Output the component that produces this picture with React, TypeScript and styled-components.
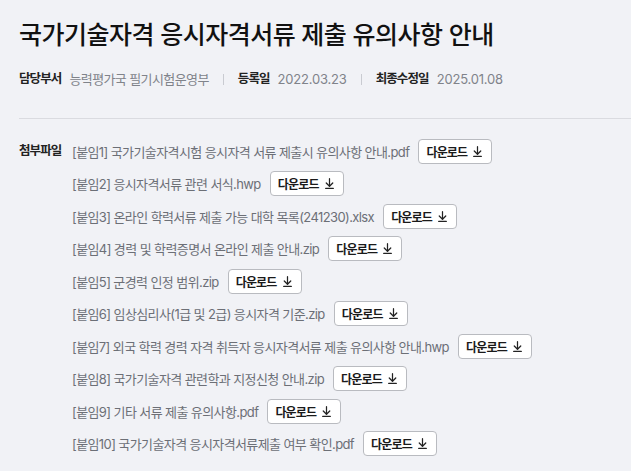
import styled, { createGlobalStyle } from 'styled-components';
import { ArrowDownToLine } from 'lucide-react';

interface MetaItem {
  label: string;
  value: string;
  numeric?: boolean;
}

const meta: MetaItem[] = [
  { label: '담당부서', value: '능력평가국 필기시험운영부' },
  { label: '등록일', value: '2022.03.23', numeric: true },
  { label: '최종수정일', value: '2025.01.08', numeric: true },
];

const files: string[] = [
  '[붙임1] 국가기술자격시험 응시자격 서류 제출시 유의사항 안내.pdf',
  '[붙임2] 응시자격서류 관련 서식.hwp',
  '[붙임3] 온라인 학력서류 제출 가능 대학 목록(241230).xlsx',
  '[붙임4] 경력 및 학력증명서 온라인 제출 안내.zip',
  '[붙임5] 군경력 인정 범위.zip',
  '[붙임6] 임상심리사(1급 및 2급) 응시자격 기준.zip',
  '[붙임7] 외국 학력 경력 자격 취득자 응시자격서류 제출 유의사항 안내.hwp',
  '[붙임8] 국가기술자격 관련학과 지정신청 안내.zip',
  '[붙임9] 기타 서류 제출 유의사항.pdf',
  '[붙임10] 국가기술자격 응시자격서류제출 여부 확인.pdf',
];

export default function App(): JSX.Element {
  return (
    <>
      <GlobalStyle />
      <Page>
        <Title>국가기술자격 응시자격서류 제출 유의사항 안내</Title>
        <MetaList>
          {meta.map(({ label, value, numeric }, index) => (
            <MetaEntry key={label} first={index === 0}>
              <MetaLabel>{label}</MetaLabel>
              <MetaValue numeric={numeric}>{value}</MetaValue>
            </MetaEntry>
          ))}
        </MetaList>
        <Attachments>
          <AttachLabel>첨부파일</AttachLabel>
          <FileList>
            {files.map((name) => (
              <FileRow key={name}>
                <FileName>{name}</FileName>
                <DownloadButton type="button">
                  다운로드
                  <ArrowDownToLine size={13} strokeWidth={2.3} />
                </DownloadButton>
              </FileRow>
            ))}
          </FileList>
        </Attachments>
      </Page>
    </>
  );
}

const GlobalStyle = createGlobalStyle`
  html, body {
    margin: 0;
    padding: 0;
    background: #f1f2f6;
  }
  body {
    font-family: 'Inter', 'Noto Sans CJK KR', sans-serif;
    color: #222;
  }
`;

const Page = styled.div`
  padding: 19px 0 0 19px;
  min-height: 452px;
`;

const Title = styled.h1`
  margin: 0;
  font-size: 25px;
  line-height: 32px;
  font-weight: 500;
  letter-spacing: -0.5px;
  color: #111;
`;

const MetaList = styled.div`
  display: flex;
  align-items: center;
  margin-top: 18px;
  height: 20px;
`;

const MetaEntry = styled.div<{ first: boolean }>`
  display: flex;
  align-items: center;
  gap: 8px;
  ${({ first }) =>
    first
      ? ''
      : `
    margin-left: 14px;
    padding-left: 14px;
    border-left: 1px solid #c9cbd1;
    height: 11px;
  `}
`;

const MetaLabel = styled.span`
  font-size: 12.5px;
  font-weight: 700;
  letter-spacing: -0.9px;
  color: #222;
  line-height: 20px;
`;

const MetaValue = styled.span<{ numeric?: boolean }>`
  font-size: 13px;
  letter-spacing: ${({ numeric }) => (numeric ? '-0.2px' : '-0.6px')};
  color: #80838a;
  line-height: 20px;
`;

const Attachments = styled.section`
  display: flex;
  margin-top: 29px;
  padding-top: 19px;
  border-top: 1px solid #dadbe0;
`;

const AttachLabel = styled.div`
  width: 53px;
  flex-shrink: 0;
  font-size: 12.5px;
  font-weight: 700;
  letter-spacing: -0.9px;
  color: #222;
  line-height: 26px;
`;

const FileList = styled.ul`
  list-style: none;
  margin: 0;
  padding: 0;
  display: flex;
  flex-direction: column;
  gap: 6.5px;
`;

const FileRow = styled.li`
  display: flex;
  align-items: center;
  gap: 9px;
  height: 26px;
`;

const FileName = styled.span`
  font-size: 13px;
  letter-spacing: -0.6px;
  color: #6c6f76;
  white-space: nowrap;
`;

const DownloadButton = styled.button`
  display: inline-flex;
  align-items: center;
  gap: 4px;
  height: 25px;
  padding: 0 7px;
  background: #fff;
  border: 1px solid #b9bbc0;
  border-radius: 4px;
  font-family: 'Inter', 'Noto Sans CJK KR', sans-serif;
  font-size: 12px;
  font-weight: 700;
  letter-spacing: -0.8px;
  color: #1a1a1a;
  cursor: pointer;

  svg {
    color: #222;
  }
`;
